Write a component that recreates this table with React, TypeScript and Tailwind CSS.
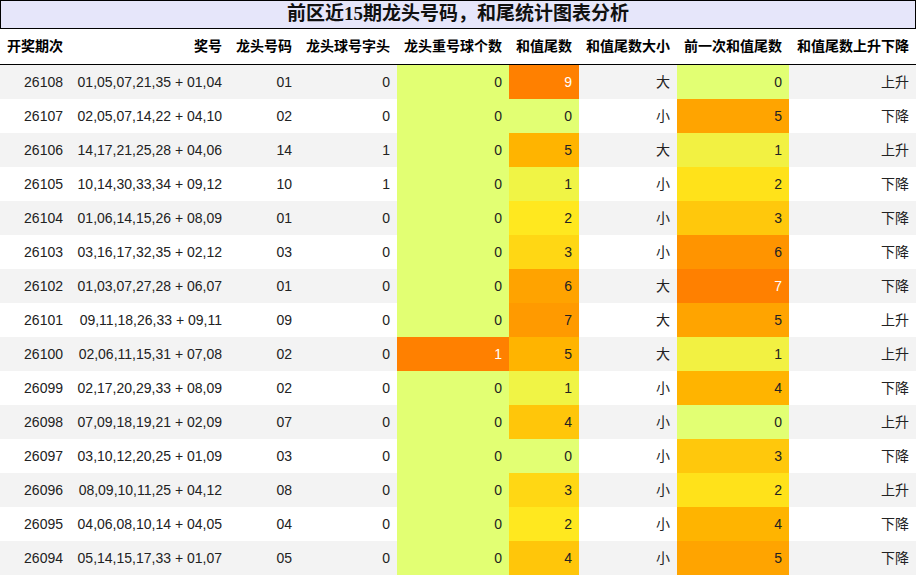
import React from "react";

type Row = [string, string, string, number, number, number, string, number, string];

const rows: Row[] = [
  ["26108", "01,05,07,21,35 + 01,04", "01", 0, 0, 9, "大", 0, "上升"],
  ["26107", "02,05,07,14,22 + 04,10", "02", 0, 0, 0, "小", 5, "下降"],
  ["26106", "14,17,21,25,28 + 04,06", "14", 1, 0, 5, "大", 1, "上升"],
  ["26105", "10,14,30,33,34 + 09,12", "10", 1, 0, 1, "小", 2, "下降"],
  ["26104", "01,06,14,15,26 + 08,09", "01", 0, 0, 2, "小", 3, "下降"],
  ["26103", "03,16,17,32,35 + 02,12", "03", 0, 0, 3, "小", 6, "下降"],
  ["26102", "01,03,07,27,28 + 06,07", "01", 0, 0, 6, "大", 7, "下降"],
  ["26101", "09,11,18,26,33 + 09,11", "09", 0, 0, 7, "大", 5, "上升"],
  ["26100", "02,06,11,15,31 + 07,08", "02", 0, 1, 5, "大", 1, "上升"],
  ["26099", "02,17,20,29,33 + 08,09", "02", 0, 0, 1, "小", 4, "下降"],
  ["26098", "07,09,18,19,21 + 02,09", "07", 0, 0, 4, "小", 0, "上升"],
  ["26097", "03,10,12,20,25 + 01,09", "03", 0, 0, 0, "小", 3, "下降"],
  ["26096", "08,09,10,11,25 + 04,12", "08", 0, 0, 3, "小", 2, "上升"],
  ["26095", "04,06,08,10,14 + 04,05", "04", 0, 0, 2, "小", 4, "下降"],
  ["26094", "05,14,15,17,33 + 01,07", "05", 0, 0, 4, "小", 5, "下降"],
];

const repeatCls: Record<number, string> = {
  0: "bg-[#e2ff73] text-[#222]",
  1: "bg-[#ff8000] text-white",
};

const sumCls: Record<number, string> = {
  0: "bg-[#e2ff73] text-[#222]",
  1: "bg-[#f0f445] text-[#222]",
  2: "bg-[#ffe81f] text-[#222]",
  3: "bg-[#ffd714] text-[#222]",
  4: "bg-[#ffc60a] text-[#222]",
  5: "bg-[#ffb400] text-[#222]",
  6: "bg-[#ffa300] text-[#222]",
  7: "bg-[#ff9a00] text-[#222]",
  8: "bg-[#ff8d00] text-[#222]",
  9: "bg-[#ff8000] text-white",
};

const prevCls: Record<number, string> = {
  0: "bg-[#e2ff73] text-[#222]",
  1: "bg-[#f2f142] text-[#222]",
  2: "bg-[#ffe21a] text-[#222]",
  3: "bg-[#ffc80c] text-[#222]",
  4: "bg-[#ffb400] text-[#222]",
  5: "bg-[#ffa400] text-[#222]",
  6: "bg-[#ff9400] text-[#222]",
  7: "bg-[#ff8000] text-white",
};

const headers = [
  "开奖期次",
  "奖号",
  "龙头号码",
  "龙头球号字头",
  "龙头重号球个数",
  "和值尾数",
  "和值尾数大小",
  "前一次和值尾数",
  "和值尾数上升下降",
];

const gridCols =
  "grid grid-cols-[70px_159px_70px_98px_112px_70px_98px_112px_127px]";
const cell = "flex items-center justify-end px-[7px] whitespace-nowrap";

export default function App() {
  return (
    <div
      className="w-[916px] h-[576px] overflow-hidden bg-white"
      style={{ fontFamily: '"Liberation Sans", "Noto Sans CJK SC", sans-serif' }}
    >
      <div
        className="h-[29px] border border-black bg-[#e6e6fa] flex items-center justify-center text-[19px] font-bold text-[#111]"
        style={{ fontFamily: '"Liberation Serif", "Noto Sans CJK SC", serif' }}
      >
        前区近15期龙头号码，和尾统计图表分析
      </div>
      <div className={`${gridCols} h-[36px] border-b border-black`}>
        {headers.map((h) => (
          <div key={h} className={`${cell} text-[14px] font-bold text-black`}>
            {h}
          </div>
        ))}
      </div>
      {rows.map((r, i) => (
        <div
          key={r[0]}
          className={`${gridCols} h-[34px] text-[14px] text-[#222] ${
            i % 2 === 0 ? "bg-[#f3f3f3]" : "bg-white"
          }`}
        >
          <div className={cell}>{r[0]}</div>
          <div className={cell}>{r[1]}</div>
          <div className={cell}>{r[2]}</div>
          <div className={cell}>{r[3]}</div>
          <div className={`${cell} ${repeatCls[r[4]]}`}>{r[4]}</div>
          <div className={`${cell} ${sumCls[r[5]]}`}>{r[5]}</div>
          <div className={cell}>{r[6]}</div>
          <div className={`${cell} ${prevCls[r[7]]}`}>{r[7]}</div>
          <div className={cell}>{r[8]}</div>
        </div>
      ))}
    </div>
  );
}
